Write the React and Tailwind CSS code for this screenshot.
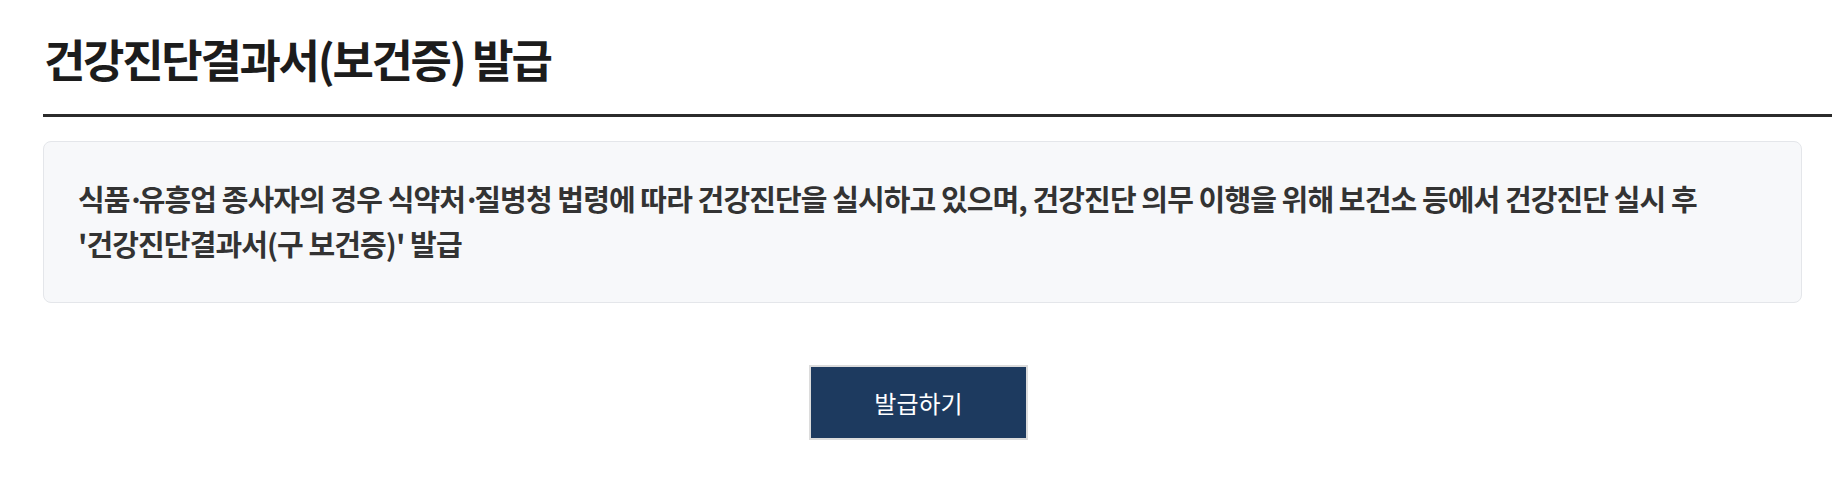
export default function App() {
  const dot = <span className="tracking-[-6px] ml-[-2px]">·</span>

  return (
    <div className="w-full min-h-[488px] bg-white pl-[43px] font-['Noto_Sans_CJK_KR','Noto_Sans',sans-serif]">
      {/* Title */}
      <div className="border-b-[3px] border-[#2b2b2b] pt-[28px] pb-[24px]">
        <h2 className="text-[45px] leading-[62px] font-bold tracking-[-2.3px] text-[#1c1c1c] pl-[1px]">
          건강진단결과서(보건증) 발급
        </h2>
      </div>

      {/* Notice box */}
      <div className="mt-[24px] mr-[30px] rounded-[8px] border border-[#e4e6ea] bg-[#f7f8fa] pl-[34px] pr-[34px] pt-[34px] pb-[36px]">
        <p className="text-[29px] leading-[45px] font-bold tracking-[-0.9px] text-[#333333]">
          식품{dot}유흥업 종사자의 경우 식약처{dot}질병청 법령에 따라 건강진단을 실시하고 있으며, 건강진단 의무 이행을 위해 보건소 등에서 건강진단 실시 후
          <br />
          '건강진단결과서(구 보건증)' 발급
        </p>
      </div>

      {/* Action */}
      <div className="mt-[62px] flex justify-center pr-[38px]">
        <button className="w-[219px] h-[75px] border-2 border-[#dcdcdc] bg-[#1d3a5f] text-white text-[24px] tracking-[0px]">
          발급하기
        </button>
      </div>
    </div>
  )
}
